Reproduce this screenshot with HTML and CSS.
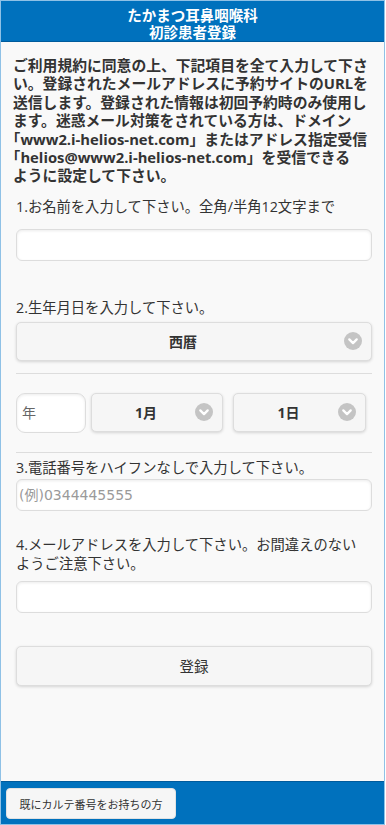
FILE: index.html
```html
<!DOCTYPE html>
<html lang="ja">

<head>
	<meta charset="utf-8">
	<meta name="viewport" content="width=device-width, initial-scale=1.0">
	<title>たかまつ耳鼻咽喉科 初診患者登録</title>
	<link rel="stylesheet" href="styles.css">
</head>

<body>

	<div class="page">

		<header class="header">
			<h1>
				<span class="title-line">たかまつ耳鼻咽喉科</span>
				<span class="title-line">初診患者登録</span>
			</h1>
		</header>

		<main class="content">

			<p class="intro">ご利用規約に同意の上、下記項目を全て入力して下さ<br>い。登録されたメールアドレスに予約サイトのURLを<br>送信します。登録された情報は初回予約時のみ使用し<br>ます。迷惑メール対策をされている方は、ドメイン<br>「www2.i-helios-net.com」またはアドレス指定受信<br>「helios@www2.i-helios-net.com」を受信できる<br>ように設定して下さい。</p>

			<form class="form">

				<!-- 1. name -->
				<label class="label label-name" for="name">1.お名前を入力して下さい。全角/半角12文字まで</label>
				<input class="input input-name" type="text" id="name">

				<!-- 2. birthday -->
				<label class="label label-birth">2.生年月日を入力して下さい。</label>
				<div class="select select-era">
					<span>西暦</span>
					<svg class="arrow" width="18" height="18" viewBox="0 0 18 18"><circle cx="9" cy="9" r="9" fill="#c4c4c4"/><path d="M5.3 7.4 9 11.1 12.7 7.4" fill="none" stroke="#fff" stroke-width="2.3" stroke-linecap="round" stroke-linejoin="round"/></svg>
				</div>

				<div class="date-row">
					<input class="input input-year" type="text" placeholder="年">
					<div class="select select-month">
						<span>1月</span>
						<svg class="arrow" width="18" height="18" viewBox="0 0 18 18"><circle cx="9" cy="9" r="9" fill="#c4c4c4"/><path d="M5.3 7.4 9 11.1 12.7 7.4" fill="none" stroke="#fff" stroke-width="2.3" stroke-linecap="round" stroke-linejoin="round"/></svg>
					</div>
					<div class="select select-day">
						<span>1日</span>
						<svg class="arrow" width="18" height="18" viewBox="0 0 18 18"><circle cx="9" cy="9" r="9" fill="#c4c4c4"/><path d="M5.3 7.4 9 11.1 12.7 7.4" fill="none" stroke="#fff" stroke-width="2.3" stroke-linecap="round" stroke-linejoin="round"/></svg>
					</div>
				</div>

				<!-- 3. phone -->
				<label class="label label-tel" for="tel">3.電話番号をハイフンなしで入力して下さい。</label>
				<input class="input input-tel" type="tel" id="tel" placeholder="(例)0344445555">

				<!-- 4. mail -->
				<label class="label label-mail" for="mail">4.メールアドレスを入力して下さい。お間違えのない<br>ようご注意下さい。</label>
				<input class="input input-mail" type="email" id="mail">

				<button class="btn btn-submit" type="button">登録</button>

			</form>

		</main>

		<footer class="footer">
			<button class="btn btn-small" type="button">既にカルテ番号をお持ちの方</button>
		</footer>

	</div>

</body>

</html>
```

FILE: styles.css
```css
/**
 * Base
 */
*,
*:before,
*:after {
	box-sizing: border-box;
}

body {
	margin: 0;
	background-color: #ffffff;
	color: #333333;
	font-family: "Open Sans", "Noto Sans CJK JP", sans-serif;
}

/**
 * Page frame
 */
.page {
	display: flex;
	flex-direction: column;
	width: 385px;
	height: 825px;
	border: 1px solid #8fc1e6;
	background-color: #f9f9f9;
}

.header {
	height: 41px;
	padding-top: 6px;
	background-color: #0071bd;
	border-bottom: 1px solid #005b9c;
}

.header h1 {
	margin: 0;
	color: #ffffff;
	font-size: 14.5px;
	font-weight: bold;
	text-align: center;
}

.title-line {
	display: block;
	height: 17px;
	line-height: 17px;
}

.content {
	flex: 1;
	padding: 0 12px 0 15px;
}

.intro {
	margin: 14px -2px 0 -3px;
	font-size: 14.8px;
	font-weight: bold;
	line-height: 18.4px;
	text-spacing-trim: trim-start;
}

/**
 * Form
 */
.form {
	display: flex;
	flex-direction: column;
}

.label {
	display: block;
	font-size: 14.3px;
	line-height: 19px;
}

.label-name {
	margin-top: 12px;
}

.label-birth {
	margin-top: 37px;
}

.label-tel {
	margin-top: 5px;
}

.label-mail {
	margin-top: 24px;
}

.input {
	width: 100%;
	height: 32px;
	padding: 0 2px;
	border: 1px solid #dddddd;
	border-radius: 6px;
	background-color: #ffffff;
	box-shadow: inset 0 1px 3px rgba(0, 0, 0, 0.08);
	color: #333333;
	font-family: "DejaVu Sans", "Noto Sans CJK JP", sans-serif;
	font-size: 14px;
	outline: none;
}

.input::placeholder {
	color: #9a9a9a;
}

.input-name {
	margin-top: 13px;
}

.input-tel {
	margin-top: 2px;
}

.input-mail {
	margin-top: 8px;
}

/**
 * Select buttons
 */
.select {
	position: relative;
	display: flex;
	align-items: center;
	justify-content: center;
	padding: 0 37px 0 15px;
	border: 1px solid #dddddd;
	border-radius: 5px;
	background-color: #f6f6f6;
	box-shadow: 0 1px 3px rgba(0, 0, 0, 0.15);
	font-size: 14px;
	font-weight: bold;
}

.select .arrow {
	position: absolute;
	top: 50%;
	right: 9px;
	margin-top: -9px;
}

.select-era {
	height: 39px;
	margin-top: 5px;
}

.date-row {
	display: flex;
	margin-top: 12px;
	padding: 19px 5px 19px 0;
	border-top: 1px solid #dddddd;
	border-bottom: 1px solid #dddddd;
}

.input-year {
	width: 70px;
	height: 40px;
	padding: 0 5px;
	border-radius: 9px;
}

.input-year::placeholder {
	color: #666666;
}

.select-month {
	width: 132px;
	height: 39px;
	margin-left: 5px;
}

.select-day {
	width: 133px;
	height: 39px;
	margin-left: 10px;
}

/**
 * Buttons
 */
.btn {
	border: 1px solid #dddddd;
	border-radius: 5px;
	background-color: #f6f6f6;
	color: #333333;
	font-family: "Open Sans", "Noto Sans CJK JP", sans-serif;
	cursor: pointer;
}

.btn-submit {
	height: 40px;
	margin-top: 33px;
	box-shadow: 0 1px 3px rgba(0, 0, 0, 0.15);
	font-size: 14.5px;
}

.footer {
	padding: 6px 5px 5px;
	background-color: #0071bd;
	border-top: 1px solid #005b9c;
}

.btn-small {
	width: 170px;
	height: 31px;
	padding: 0 6px;
	border-color: #e2e2e2;
	border-radius: 4px;
	font-size: 11px;
	white-space: nowrap;
}
```
